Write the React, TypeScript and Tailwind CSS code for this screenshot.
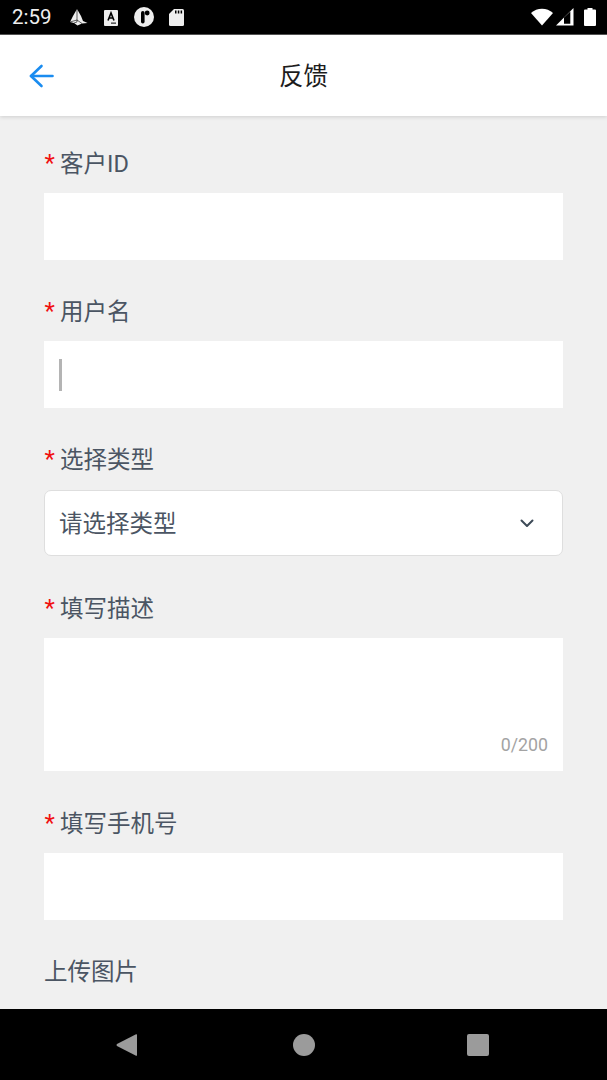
const cjk = "font-['Roboto','Noto_Sans_CJK_SC',sans-serif]"

function FieldLabel({ text, required = true }: { text: string; required?: boolean }) {
  return (
    <div className="flex h-[30px] items-center text-[23.5px] leading-[30px] text-[#4b5563]">
      {required && (
        <span className="flex w-[16px] justify-start pl-[0.5px] text-[24px] leading-[30px] text-[#f01010]">*</span>
      )}
      <span className="pt-[2px]">{text}</span>
    </div>
  )
}

function StatusBar() {
  return (
    <div className="flex h-[35px] shrink-0 items-center border-b border-[#555555] bg-black pl-[12px] pr-[11px] text-white">
      <span className="w-[40px] text-[20.5px] leading-none text-[#eeeeee]">2:59</span>
      <svg className="ml-[18px] mt-[1px]" width="18" height="17" viewBox="0 0 18 17">
        <path d="M7 0 L11 7 L13 12 L17.5 14 L12 14.5 L7.5 16.5 L4 14 L0 13 L3 7 Z" fill="#eeeeee" />
        <path d="M7 0 L7 13 M0 13 L7 11 L12 14.5 M4 14 L7 13" stroke="#000" strokeWidth="0.6" fill="none" />
      </svg>
      <svg className="ml-[16px] mt-[1px]" width="14" height="16" viewBox="0 0 14 16">
        <rect width="14" height="16" rx="1" fill="#eeeeee" />
        <path d="M4 10.5 L7 3 L10 10.5 M5.2 8 H8.8" stroke="#000" strokeWidth="1.6" fill="none" />
        <rect x="7" y="12.6" width="5" height="1" fill="#000" />
      </svg>
      <svg className="ml-[16px]" width="20" height="20" viewBox="0 0 20 20">
        <circle cx="10" cy="10" r="10" fill="#eeeeee" />
        <rect x="7" y="4" width="3.6" height="12.5" rx="1.8" fill="#000" />
        <circle cx="13.2" cy="6" r="2.4" fill="#000" />
      </svg>
      <svg className="ml-[15px]" width="15" height="17" viewBox="0 0 15 17" fill="#eeeeee">
        <path d="M5 0 H13.5 A1.5 1.5 0 0 1 15 1.5 V15.5 A1.5 1.5 0 0 1 13.5 17 H1.5 A1.5 1.5 0 0 1 0 15.5 V5 Z" />
        <rect x="6" y="1.5" width="1.5" height="3" fill="#000" />
        <rect x="8.8" y="1.5" width="1.5" height="3" fill="#000" />
        <rect x="11.6" y="1.5" width="1.5" height="3" fill="#000" />
      </svg>
      <div className="ml-auto flex items-center">
        <svg width="22" height="18" viewBox="0 0 22 18" fill="#ffffff">
          <path d="M11 17.5 L0 5 C6 -0.7 16 -0.7 22 5 Z" />
        </svg>
        <svg className="ml-[3px]" width="18" height="18" viewBox="0 0 18 18">
          <path d="M0 17.5 L17.5 0 V17.5 Z" fill="#ffffff" />
          <path d="M8 15.8 V9.5 L14.3 3.5 V15.8 Z" fill="#000" />
        </svg>
        <svg className="ml-[10px]" width="12" height="18" viewBox="0 0 12 18" fill="#ffffff">
          <path d="M3.5 1.5 V0 H8.5 V1.5 H11 A1 1 0 0 1 12 2.5 V17 A1 1 0 0 1 11 18 H1 A1 1 0 0 1 0 17 V2.5 A1 1 0 0 1 1 1.5 Z" />
        </svg>
      </div>
    </div>
  )
}

function Header() {
  return (
    <div className="relative z-10 flex h-[81px] shrink-0 items-center justify-center bg-white shadow-[0_1px_4px_rgba(0,0,0,0.14)]">
      <svg className="absolute left-[29px] top-[29px]" width="25" height="24" viewBox="0 0 25 24" fill="none" stroke="#1a8cf0" strokeWidth="2.6" strokeLinecap="round" strokeLinejoin="round">
        <path d="M23.5 12 H2" />
        <path d="M12.5 2 L2 12 L12.5 22" />
      </svg>
      <span className="mt-[3px] text-[24.5px] text-[#1c1c1c]">反馈</span>
    </div>
  )
}

function NavBar() {
  return (
    <div className="flex h-[71px] shrink-0 items-center bg-black">
      <svg className="ml-[116px]" width="21" height="24" viewBox="0 0 22 24" fill="#9b9b9b">
        <path d="M21 0.8 Q22 0.3 22 1.6 V22.4 Q22 23.7 21 23.2 L1 13 Q0 12 1 11 Z" />
      </svg>
      <div className="ml-[156px] h-[22px] w-[22px] rounded-full bg-[#9b9b9b]" />
      <div className="ml-[152px] h-[22px] w-[22px] rounded-[2px] bg-[#9b9b9b]" />
    </div>
  )
}

export default function App() {
  return (
    <div className={`flex h-[1080px] w-[607px] flex-col overflow-hidden bg-[#f0f0f0] ${cjk}`}>
      <StatusBar />
      <Header />

      <div className="flex-1 overflow-hidden pl-[44px] pr-[44.5px] pt-[32px]">
        <FieldLabel text="客户ID" />
        <div className="mt-[15px] h-[67px] bg-white" />

        <div className="mt-[36px]">
          <FieldLabel text="用户名" />
        </div>
        <div className="mt-[15px] flex h-[67px] items-center bg-white pl-[15px]">
          <div className="h-[32px] w-[3px] bg-[#b4b4b4]" />
        </div>

        <div className="mt-[36px]">
          <FieldLabel text="选择类型" />
        </div>
        <div className="mt-[16px] flex h-[66px] items-center justify-between rounded-[7px] border border-[#dedede] bg-white pl-[14px] pr-[28px]">
          <span className="mt-[3px] text-[23.5px] text-[#4b5563]">请选择类型</span>
          <svg width="14" height="9" viewBox="0 0 14 9" fill="none" stroke="#3d4a57" strokeWidth="2" strokeLinecap="round" strokeLinejoin="round">
            <path d="M1.5 1.5 L7 7 L12.5 1.5" />
          </svg>
        </div>

        <div className="mt-[37px]">
          <FieldLabel text="填写描述" />
        </div>
        <div className="relative mt-[15px] h-[133px] bg-white">
          <span className="absolute bottom-[15px] right-[14.5px] text-[17.8px] leading-[22px] text-[#a3a3a3]">0/200</span>
        </div>

        <div className="mt-[37px]">
          <FieldLabel text="填写手机号" />
        </div>
        <div className="mt-[15px] h-[67px] bg-white" />

        <div className="mt-[36px]">
          <FieldLabel text="上传图片" required={false} />
        </div>
      </div>

      <NavBar />
    </div>
  )
}
